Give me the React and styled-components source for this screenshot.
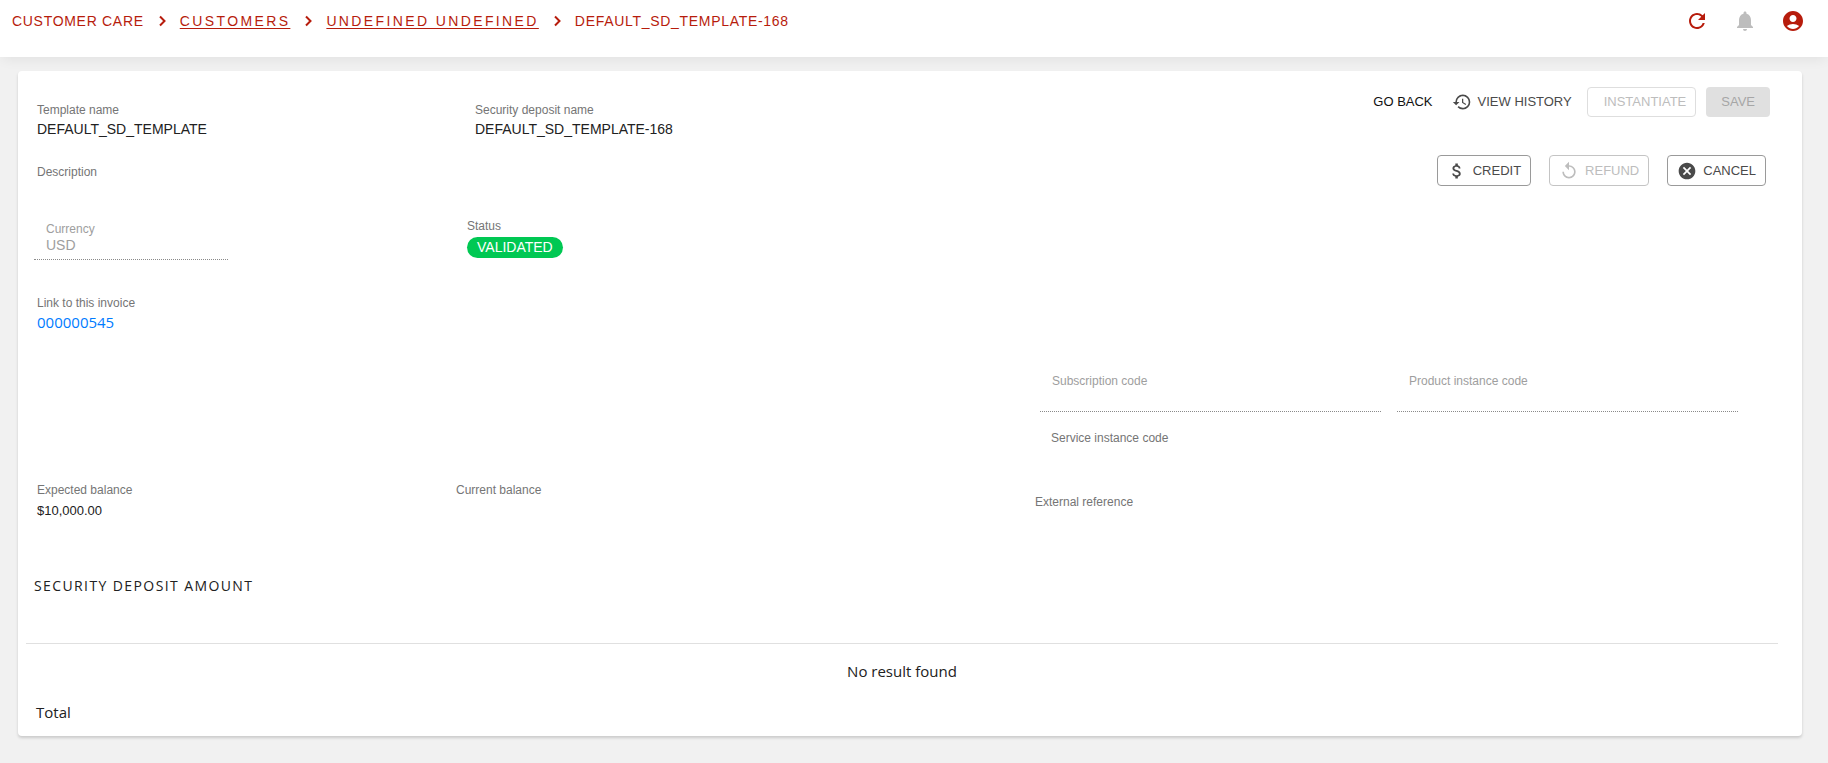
import * as React from 'react'
import styled, { createGlobalStyle } from 'styled-components'
import {
	MdAccountCircle,
	MdAttachMoney,
	MdCancel,
	MdHistory,
	MdNotifications,
	MdRefresh,
	MdReplay,
} from 'react-icons/md'

const GlobalStyle = createGlobalStyle`
	:root {
		--color-primary: #b71c0c;
		--color-text: #212121;
		--color-label: #757575;
		--color-disabled: #9e9e9e;
		--color-link: #007bff;
		--font-body: "Liberation Sans", Arial, sans-serif;
		--font-content: "Open Sans", "Noto Sans", sans-serif;
	}

	*, *::before, *::after {
		box-sizing: border-box;
	}

	body {
		margin: 0;
		background: #f1f1f1;
		color: var(--color-text);
		font-family: var(--font-body);
		font-size: 14px;
		line-height: 20px;
	}
`

const Header = styled.header`
	display: flex;
	justify-content: space-between;
	align-items: flex-start;
	height: 57px;
	padding: 0 11px 0 12px;
	background: white;
	color: var(--color-primary);
	box-shadow: 0 4px 12px -2px rgba(0, 0, 0, 0.07);
`

const Breadcrumb = styled.nav`
	display: flex;
	align-items: center;
	height: 42px;
	letter-spacing: 0.05em;
`

const BreadcrumbLink = styled.a`
	color: inherit;
	letter-spacing: 0.17em;
	text-decoration: underline;
	text-underline-offset: 2px;
`

const Separator = styled.svg`
	width: 12px;
	height: 12px;
	margin: 0 12px;
	fill: none;
	stroke: currentColor;
	stroke-width: 2;
`

const HeaderActions = styled.div`
	display: flex;
`

const IconButton = styled.button`
	display: flex;
	align-items: center;
	justify-content: center;
	width: 48px;
	height: 42px;
	padding: 0;
	border: 0;
	background: none;
	color: ${props => props.$muted ? '#bdbdbd' : 'inherit'};
`

const Card = styled.main`
	margin: 14px 26px 24px 18px;
	padding-bottom: 10px;
	background: white;
	border-radius: 4px;
	box-shadow: 0 2px 3px rgba(0, 0, 0, 0.16);
`

const Details = styled.section`
	display: grid;
	grid-template-columns: 433fr 500fr 803fr;
	padding: 16px 32px 0 16px;
`

const Column = styled.div`
	display: flex;
	flex-direction: column;
	align-items: flex-start;
	padding-top: 15px;
`

const Field = styled.div`
	display: flex;
	flex-direction: column;
	gap: ${props => props.$gap || 1}px;
	min-height: 38px;
	padding-left: ${props => props.$indent || 0}px;
	margin-bottom: ${props => props.$space || 0}px;
`

const Label = styled.span`
	color: var(--color-label);
	font-size: 12px;
	line-height: 16px;
`

const Value = styled.span`
	font-size: ${props => props.$small ? 13 : 14}px;
`

const InvoiceLink = styled.a`
	color: var(--color-link);
	font-family: var(--font-content);
	font-size: 15px;
	text-decoration: none;
`

const Badge = styled.span`
	padding: 0 10px;
	border-radius: 11px;
	background: #00c853;
	color: white;
	line-height: 21px;
`

const InputBase = styled.div`
	display: flex;
	flex-direction: column;
	width: ${props => props.$width || '100%'};
	margin-bottom: ${props => props.$space || 0}px;
	border-bottom: 1px dotted #8a8a8a;

	label {
		padding-left: 12px;
		color: var(--color-disabled);
		font-size: 12px;
		line-height: 16px;
	}

	input {
		width: 100%;
		height: 22px;
		padding: 0 12px 6px;
		border: 0;
		background: none;
		color: var(--color-disabled);
		font: 14px/16px var(--font-body);
	}
`

const Actions = styled.div`
	display: flex;
	flex-direction: column;
	align-items: flex-end;
	gap: 38px;
`

const ActionRow = styled.div`
	display: flex;
	align-items: center;
	gap: ${props => props.$gap}px;
	padding-right: ${props => props.$inset || 0}px;
`

const Button = styled.button`
	display: flex;
	align-items: center;
	gap: 6px;
	height: 30px;
	padding: 0 14px;
	border: 1px solid transparent;
	border-radius: 4px;
	background: none;
	color: #4a4a4a;
	font: 13px/20px var(--font-body);
	text-transform: uppercase;
	white-space: nowrap;
`

const TextButton = styled(Button)`
	padding: 0;
	margin-right: ${props => props.$space}px;
	color: ${props => props.$strong ? '#111' : '#4a4a4a'};
`

const OutlinedButton = styled(Button)`
	height: 31px;
	padding: 0 9px;
	border-color: #9a9a9a;

	&:disabled {
		border-color: #c4c4c4;
		color: #bdbdbd;
	}
`

const InstantiateButton = styled(Button)`
	padding: 0 9px 0 16px;

	&:disabled {
		border-color: #dedede;
		color: #bdbdbd;
	}
`

const SaveButton = styled(Button)`
	&:disabled {
		background: #e0e0e0;
		color: #a6a6a6;
	}
`

const Codes = styled.section`
	display: grid;
	grid-template-columns: 1fr 1fr;
	gap: 18px 16px;
	width: 698px;
	max-width: 100%;
	margin: 40px 64px 0 auto;
`

const Balances = styled.section`
	display: grid;
	grid-template-columns: 419fr 579fr 767fr;
	padding: 14px 0 0 19px;
`

const Reference = styled(Field)`
	padding-top: 12px;
`

const SectionTitle = styled.h2`
	margin: 55px 16px 47px;
	font: 500 14px/20px var(--font-content);
	letter-spacing: 0.1em;
	text-transform: uppercase;
`

const TableWrapper = styled.div`
	padding: 0 24px 0 8px;
`

const Table = styled.table`
	width: 100%;
	border-collapse: collapse;
	border-top: 1px solid #e0e0e0;
	font-family: var(--font-content);
	font-size: 15px;

	td {
		padding: 17px 10px 4px;
		text-align: left;
	}

	tbody td {
		text-align: center;
	}
`

const Chevron = () => (
	<Separator viewBox="0 0 12 12" aria-hidden="true">
		<path d="M4 1.5 8.5 6 4 10.5" />
	</Separator>
)

const TextField = ({ id, label, value = '', width, space }) => (
	<InputBase $width={width} $space={space}>
		<label htmlFor={id}>{label}</label>
		<input id={id} type="text" value={value} disabled readOnly />
	</InputBase>
)

const App = () => (
	<>
		<GlobalStyle />
		<Header>
			<Breadcrumb aria-label="Breadcrumb">
				<span>CUSTOMER CARE</span>
				<Chevron />
				<BreadcrumbLink href="#customers">CUSTOMERS</BreadcrumbLink>
				<Chevron />
				<BreadcrumbLink href="#customer">UNDEFINED UNDEFINED</BreadcrumbLink>
				<Chevron />
				<span>DEFAULT_SD_TEMPLATE-168</span>
			</Breadcrumb>
			<HeaderActions>
				<IconButton type="button" aria-label="Refresh">
					<MdRefresh size={24} />
				</IconButton>
				<IconButton type="button" aria-label="Notifications" $muted>
					<MdNotifications size={24} />
				</IconButton>
				<IconButton type="button" aria-label="Account">
					<MdAccountCircle size={24} />
				</IconButton>
			</HeaderActions>
		</Header>
		<Card>
			<Details>
				<Column>
					<Field $indent={3} $space={24}>
						<Label>Template name</Label>
						<Value>DEFAULT_SD_TEMPLATE</Value>
					</Field>
					<Field $indent={3} $space={19}>
						<Label>Description</Label>
					</Field>
					<TextField id="currency" label="Currency" value="USD" width="194px" space={35} />
					<Field $indent={3}>
						<Label>Link to this invoice</Label>
						<InvoiceLink href="#invoice">000000545</InvoiceLink>
					</Field>
				</Column>
				<Column>
					<Field $indent={8} $space={78}>
						<Label>Security deposit name</Label>
						<Value>DEFAULT_SD_TEMPLATE-168</Value>
					</Field>
					<Field $gap={3}>
						<Label>Status</Label>
						<Badge>VALIDATED</Badge>
					</Field>
				</Column>
				<Actions>
					<ActionRow $gap={10}>
						<TextButton type="button" $space={7} $strong>Go back</TextButton>
						<TextButton type="button" $space={4}>
							<MdHistory size={20} />
							View history
						</TextButton>
						<InstantiateButton type="button" disabled>Instantiate</InstantiateButton>
						<SaveButton type="button" disabled>Save</SaveButton>
					</ActionRow>
					<ActionRow $gap={18} $inset={4}>
						<OutlinedButton type="button">
							<MdAttachMoney size={20} />
							Credit
						</OutlinedButton>
						<OutlinedButton type="button" disabled>
							<MdReplay size={20} />
							Refund
						</OutlinedButton>
						<OutlinedButton type="button">
							<MdCancel size={20} />
							Cancel
						</OutlinedButton>
					</ActionRow>
				</Actions>
			</Details>
			<Codes>
				<TextField id="subscription-code" label="Subscription code" />
				<TextField id="product-instance-code" label="Product instance code" />
				<Field $indent={11}>
					<Label>Service instance code</Label>
				</Field>
			</Codes>
			<Balances>
				<Field $gap={3}>
					<Label>Expected balance</Label>
					<Value $small>$10,000.00</Value>
				</Field>
				<Field>
					<Label>Current balance</Label>
				</Field>
				<Reference>
					<Label>External reference</Label>
				</Reference>
			</Balances>
			<SectionTitle>Security deposit amount</SectionTitle>
			<TableWrapper>
				<Table>
					<tbody>
						<tr>
							<td>No result found</td>
						</tr>
					</tbody>
					<tfoot>
						<tr>
							<td>Total</td>
						</tr>
					</tfoot>
				</Table>
			</TableWrapper>
		</Card>
	</>
)

export default App
